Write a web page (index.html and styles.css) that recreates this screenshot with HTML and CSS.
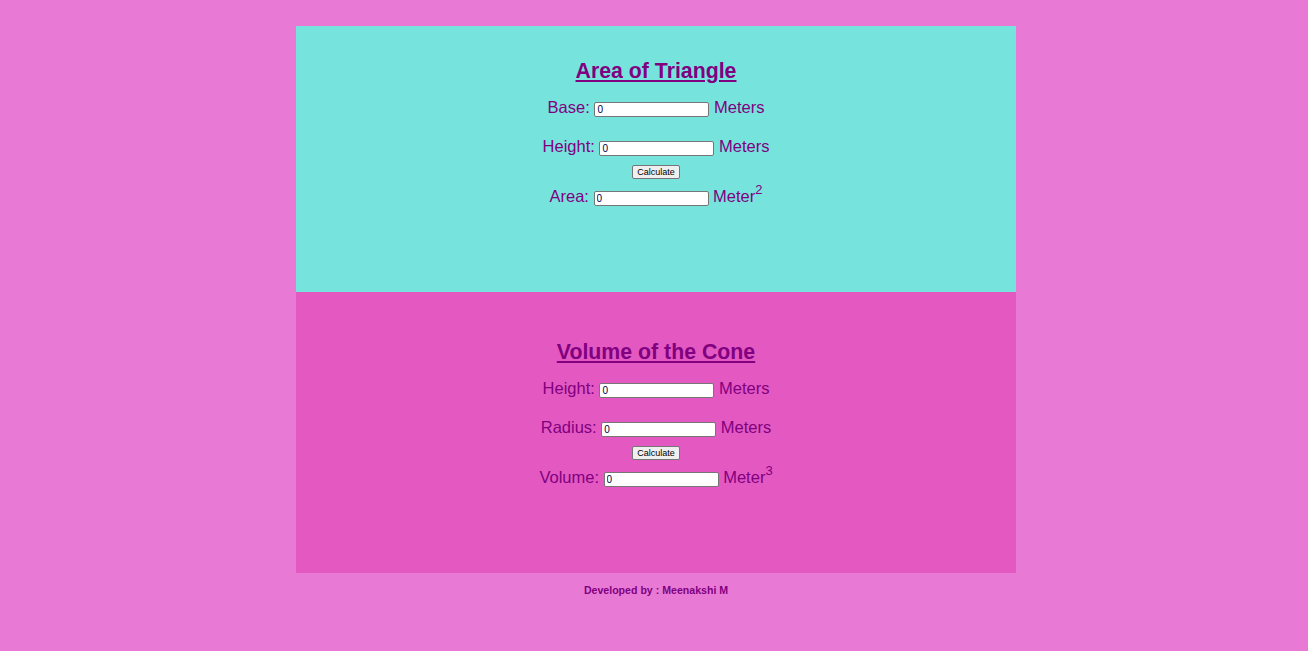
FILE: index.html
```html
<!DOCTYPE html>
<html>
<head>
<meta charset="utf-8">
<link rel="stylesheet" href="styles.css">
</head>
<body>
<div class="page">
  <section class="card card-triangle">
    <h2 class="title">Area of Triangle</h2>
    <div class="row">Base: <input class="field" type="text" value="0"> Meters</div>
    <div class="row row-2">Height: <input class="field" type="text" value="0"> Meters</div>
    <div class="btn-row"><button class="btn">Calculate</button></div>
    <div class="row row-result">Area: <input class="field" type="text" value="0"> Meter<sup class="sup">2</sup></div>
  </section>
  <section class="card card-cone">
    <h2 class="title">Volume of the Cone</h2>
    <div class="row">Height: <input class="field" type="text" value="0"> Meters</div>
    <div class="row row-2">Radius: <input class="field" type="text" value="0"> Meters</div>
    <div class="btn-row"><button class="btn">Calculate</button></div>
    <div class="row row-result">Volume: <input class="field" type="text" value="0"> Meter<sup class="sup">3</sup></div>
  </section>
  <footer class="footer">Developed by : Meenakshi M</footer>
</div>
</body>
</html>
```
FILE: styles.css
```css
html, body {
  margin: 0;
  padding: 0;
}
body {
  background: #e87ad5;
  font-family: "Liberation Sans", Arial, sans-serif;
  color: #800080;
  padding-left: 4px;
}
.page {
  width: 720px;
  margin: 26px auto 0;
  display: flex;
  flex-direction: column;
}
.card {
  display: flex;
  flex-direction: column;
  align-items: center;
  text-align: center;
  box-sizing: border-box;
}
.card-triangle {
  background: #76e4dd;
  height: 266px;
  padding-top: 33px;
}
.card-cone {
  background: #e459c1;
  height: 281px;
  padding-top: 48px;
}
.title {
  margin: 0;
  font-size: 21.3px;
  line-height: 24px;
  font-weight: bold;
  text-decoration: underline;
  color: #800080;
}
.row {
  font-size: 16.5px;
  line-height: 20px;
  height: 20px;
  margin-top: 14px;
  white-space: nowrap;
}
.row-2 {
  margin-top: 19px;
}
.row-result {
  margin-top: 8px;
}
.field {
  width: 115px;
  height: 15px;
  box-sizing: border-box;
  font-family: "Liberation Sans", Arial, sans-serif;
  font-size: 10px;
  padding: 0 2px;
  border: 1px solid #767676;
  border-radius: 2px;
  background: #ffffff;
  color: #000040;
  vertical-align: 0;
}
.btn-row {
  margin-top: 9px;
  height: 13px;
  display: flex;
  justify-content: center;
}
.btn {
  width: 48px;
  height: 14px;
  box-sizing: border-box;
  padding: 0;
  font-family: "Liberation Sans", Arial, sans-serif;
  font-size: 9px;
  line-height: 12px;
  color: #000;
  background: #efefef;
  border: 1px solid #767676;
  border-radius: 2px;
}
.sup {
  font-size: 13px;
  line-height: 0;
  vertical-align: 8px;
}
.footer {
  text-align: center;
  font-size: 10.6px;
  font-weight: bold;
  line-height: 14px;
  padding-top: 10px;
}
```
